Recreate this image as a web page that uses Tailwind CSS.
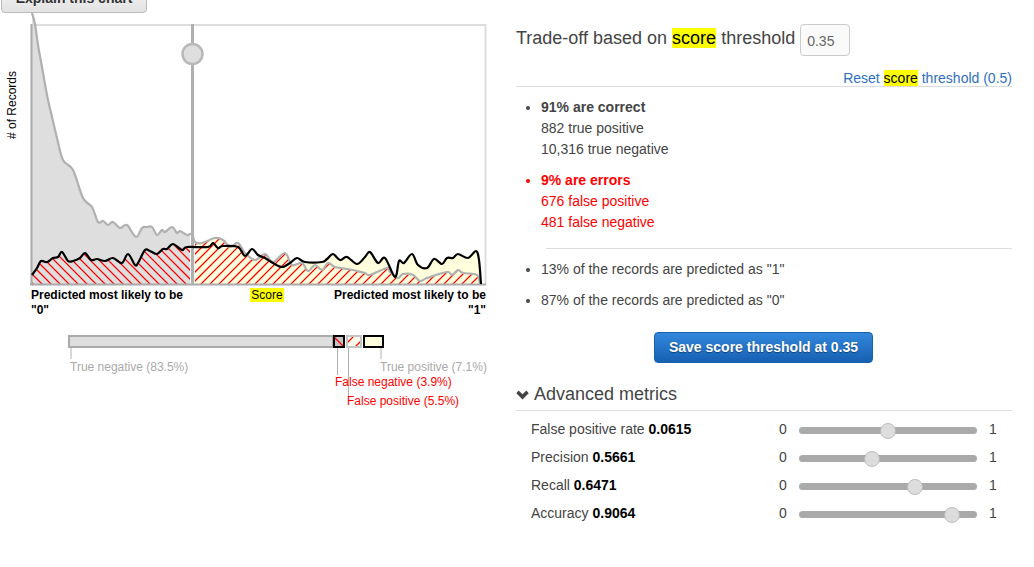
<!DOCTYPE html>
<html lang="en">
<head>
<meta charset="utf-8">
<title>Score threshold</title>
<script src="https://cdn.jsdelivr.net/npm/@tailwindcss/browser@4"></script>
</head>
<body class="bg-white">
<div class="flex w-[1034px] h-[567px] overflow-hidden bg-white font-['Liberation_Sans',Arial,sans-serif] text-[14px] text-[#444]">

  <!-- Left column: chart -->
  <div class="w-[516px] shrink-0">
    <button class="block ml-px -mt-[17px] w-[146px] h-[30px] rounded-[4px] border border-[#bbb] bg-gradient-to-b from-[#f8f8f8] to-[#e2e2e2] text-[14px] font-bold text-[#333] leading-[28px]">Explain this chart</button>

    <svg class="block" width="516" height="275" viewBox="0 13 516 275" font-family="'Liberation Sans',Arial,sans-serif">
      <defs>
        <clipPath id="clipL"><rect x="31" y="0" width="159" height="284"/></clipPath>
        <clipPath id="clipR"><rect x="195" y="0" width="290" height="284"/></clipPath>
        <clipPath id="underBlack"><polygon points="32,275 37,268 41,261 47,262 53,258 58,257 62,252 68,261 73,261 80,258 85,253 91,260 97,259 105,261 113,258 122,263 128,254 135,265 138,263 145,250 150,251 157,254 163,249 167,249 173,244 182,250 187,247 192,247 192,284 32,284"/></clipPath>
        <clipPath id="underGray"><polygon points="192,234 195,242 202,243 215,238 223,240 230,247 238,243 245,253 255,260 265,254 273,262 285,253 292,265 302,263 308,271 315,265 322,270 328,263 335,267 348,269 357,271 365,273 370,275 387,268 390,272 398,278 403,274 413,275 420,281 427,278 447,272 452,275 458,270 463,273 477,275 480,284 192,284"/></clipPath>
      </defs>

      <!-- Frame -->
      <path d="M32 25H485.5V284" fill="none" stroke="#ddd" stroke-width="2"/>

      <!-- Left region fills -->
      <g clip-path="url(#clipL)">
        <polygon fill="#dedede" points="32,13 35,24 38,45 42,67 47,95 52,117 57,138 63,160 73,170 83,198 92,207 98,222 103,221 108,225 113,222 120,228 127,225 136,237 142,228 147,227 152,227 157,235 162,230 165,232 172,227 177,233 180,231 187,235 192,234 192,284 32,284"/>
        <g clip-path="url(#underBlack)">
          <path data-hatch="down" stroke="#ff0000" stroke-width="1.25" fill="none"/>
        </g>
      </g>

      <!-- Right region fills -->
      <g clip-path="url(#clipR)">
        <polygon fill="#ffffdd" points="192,234 195,242 202,243 215,238 223,240 230,247 238,243 245,253 255,260 265,254 273,262 285,253 292,265 302,263 322,262 327,259 333,254 340,260 347,257 357,264 365,257 370,252 378,263 385,258 395,277 399,261 404,263 412,254 418,265 427,268 434,259 442,264 447,258 453,258 458,254 468,258 476,251 479,260 481,284 192,284"/>
        <g clip-path="url(#underGray)">
          <path data-hatch="up" stroke="#ff0000" stroke-width="1.25" fill="none"/>
        </g>
      </g>

      <!-- Axes -->
      <path d="M31.5 24V285M30 284.5H486" fill="none" stroke="#aaa" stroke-width="2"/>

      <!-- Gray curve -->
      <path data-pts="32,13 35,24 38,45 42,67 47,95 52,117 57,138 63,160 73,170 83,198 92,207 98,222 103,221 108,225 113,222 120,228 127,225 136,237 142,228 147,227 152,227 157,235 162,230 165,232 172,227 177,233 180,231 187,235 192,234 195,242 202,243 215,238 223,240 230,247 238,243 245,253 255,260 265,254 273,262 285,253 292,265 302,263 308,271 315,265 322,270 328,263 335,267 348,269 357,271 365,273 370,275 387,268 390,272 398,278 403,274 413,275 420,281 427,278 447,272 452,275 458,270 463,273 477,275 480,284" fill="none" stroke="#b0b0b0" stroke-width="2.2"/>

      <!-- Threshold line and handle -->
      <rect x="191" y="24" width="3" height="260" fill="#b0b0b0"/>
      <circle cx="192.5" cy="54" r="10" fill="#dedede" stroke="#b8b8b8" stroke-width="2.5"/>

      <!-- Black curve -->
      <path data-pts="32,275 37,268 41,261 47,262 53,258 58,257 62,252 68,261 73,261 80,258 85,253 91,260 97,259 105,261 113,258 122,263 128,254 135,265 138,263 145,250 150,251 157,254 163,249 167,249 173,244 182,250 187,247 208,247 213,243 218,248 223,246 238,247 245,256 252,249 258,255 265,258 273,263 282,267 290,263 297,258 305,262 322,262 327,259 333,254 340,260 347,257 357,264 365,257 370,252 378,263 385,258 395,277 399,261 404,263 412,254 418,265 427,268 434,259 442,264 447,258 453,258 458,254 468,258 476,251 479,260 481,284" fill="none" stroke="#000" stroke-width="2.2"/>

      <text transform="translate(16 139) rotate(-90)" font-size="12" fill="#000"># of Records</text>
    </svg>

    <div class="flex ml-[31px] w-[455px] text-[12px] font-bold leading-[15px] text-black">
      <div class="w-[220px]">Predicted most likely to be<br>"0"</div>
      <div class="flex-1 text-center font-normal"><span class="bg-[#ffff00] px-px">Score</span></div>
      <div class="w-[203px] text-right">Predicted most likely to be<br>"1"</div>
    </div>

    <svg class="block" width="516" height="100" viewBox="0 318 516 100" font-family="'Liberation Sans',Arial,sans-serif" font-size="12">
      <defs>
        <clipPath id="barFn"><rect x="334" y="336" width="10" height="11"/></clipPath>
        <clipPath id="barFp"><rect x="347" y="336" width="14" height="11"/></clipPath>
      </defs>
      <!-- Leader lines -->
      <path d="M71 348V359M337.5 348V375M348.5 348V396M381 348V359" stroke="#b0b0b0" stroke-width="1" fill="none"/>
      <!-- True negative -->
      <rect x="69" y="336" width="264" height="11" fill="#dedede" stroke="#aaa" stroke-width="2"/>
      <!-- False negative -->
      <rect x="334" y="336" width="10" height="11" fill="#c4c4c4"/>
      <path clip-path="url(#barFn)" d="M330 333L350 353" stroke="#ff0000" stroke-width="1.25" fill="none"/>
      <rect x="334" y="336" width="10" height="11" fill="none" stroke="#000" stroke-width="2"/>
      <!-- False positive -->
      <rect x="347" y="336" width="14" height="11" fill="#fffff0"/>
      <path clip-path="url(#barFp)" d="M340 350L358 332M350 352L368 334" stroke="#ff0000" stroke-width="1.25" fill="none"/>
      <rect x="347" y="336" width="14" height="11" fill="none" stroke="#c4c4c4" stroke-width="2"/>
      <!-- True positive -->
      <rect x="364" y="336" width="19" height="11" fill="#ffffdd" stroke="#000" stroke-width="2"/>

      <text x="70" y="371" fill="#aaa">True negative (83.5%)</text>
      <text x="380" y="371" fill="#aaa">True positive (7.1%)</text>
      <text x="335" y="386" fill="#ff0000">False negative (3.9%)</text>
      <text x="347" y="405" fill="#ff0000">False positive (5.5%)</text>
    </svg>
  </div>

  <!-- Right column -->
  <div class="w-[496px] shrink-0">
    <div class="flex items-center mt-[24px] h-[32px] text-[18px]">
      <span class="-mt-[4px]">Trade-off based on <span class="bg-[#ffff00] text-black">score</span> threshold</span>
      <div class="ml-[5px] w-[50px] h-[32px] rounded-[4px] border border-[#ccc] bg-[#fafafa] pl-[6px] text-[14px] leading-[32px] text-[#666]">0.35</div>
    </div>

    <div class="mt-[12px] h-[19px] border-b border-[#ddd] text-right leading-[20px] text-[#2f6fbf]">Reset <span class="bg-[#ffff00] text-black">score</span> threshold (0.5)</div>

    <ul class="list-disc pl-[25px] pt-[10px] leading-[21px]">
      <li><b>91% are correct</b><br>882 true positive<br>10,316 true negative</li>
      <li class="mt-[10px] text-[#ff0000]"><b>9% are errors</b><br>676 false positive<br>481 false negative</li>
    </ul>
    <div class="ml-[30px] mt-[15px] border-t border-[#ddd]"></div>
    <ul class="list-disc pl-[25px] pt-[10px] leading-[21px]">
      <li>13% of the records are predicted as "1"</li>
      <li class="mt-[10px]">87% of the records are predicted as "0"</li>
    </ul>

    <div class="flex mt-[21px] pl-[138px]">
      <button class="w-[219px] h-[31px] rounded-[4px] border border-[#1a62b0] bg-gradient-to-b from-[#3388dc] to-[#1660b2] text-[14px] font-bold text-white [text-shadow:0_1px_1px_rgba(0,0,0,0.4)]">Save score threshold at 0.35</button>
    </div>

    <div class="flex items-center mt-[19px] h-[29px] border-b border-[#ddd] pb-[3px] text-[18px]">
      <svg class="shrink-0 mr-[5px]" width="13" height="10" viewBox="0 0 13 10"><path d="M0.3 3.2L2.6 0.6L6.5 4.3L10.4 0.6L12.7 3.2L6.5 9.4Z" fill="#444"/></svg>
      <span>Advanced metrics</span>
    </div>

    <div class="pt-[4px]">
      <div class="flex items-center h-[28px] pl-[15px]">
        <div class="w-[248px]">False positive rate <b class="text-black">0.0615</b></div>
        <div class="w-[20px]">0</div>
        <div class="relative w-[178px] h-[7px] mt-[2px] rounded-full bg-[#aaa]"><div class="absolute left-[81px] -top-[4px] w-[16px] h-[16px] rounded-full border border-[#bbb] bg-[#ddd]"></div></div>
        <div class="ml-[12px]">1</div>
      </div>
      <div class="flex items-center h-[28px] pl-[15px]">
        <div class="w-[248px]">Precision <b class="text-black">0.5661</b></div>
        <div class="w-[20px]">0</div>
        <div class="relative w-[178px] h-[7px] mt-[2px] rounded-full bg-[#aaa]"><div class="absolute left-[65px] -top-[4px] w-[16px] h-[16px] rounded-full border border-[#bbb] bg-[#ddd]"></div></div>
        <div class="ml-[12px]">1</div>
      </div>
      <div class="flex items-center h-[28px] pl-[15px]">
        <div class="w-[248px]">Recall <b class="text-black">0.6471</b></div>
        <div class="w-[20px]">0</div>
        <div class="relative w-[178px] h-[7px] mt-[2px] rounded-full bg-[#aaa]"><div class="absolute left-[108px] -top-[4px] w-[16px] h-[16px] rounded-full border border-[#bbb] bg-[#ddd]"></div></div>
        <div class="ml-[12px]">1</div>
      </div>
      <div class="flex items-center h-[28px] pl-[15px]">
        <div class="w-[248px]">Accuracy <b class="text-black">0.9064</b></div>
        <div class="w-[20px]">0</div>
        <div class="relative w-[178px] h-[7px] mt-[2px] rounded-full bg-[#aaa]"><div class="absolute left-[145px] -top-[4px] w-[16px] h-[16px] rounded-full border border-[#bbb] bg-[#ddd]"></div></div>
        <div class="ml-[12px]">1</div>
      </div>
    </div>
  </div>
</div>
<script>
  // Smooth the sampled curves through their data points (Catmull-Rom to Bezier).
  document.querySelectorAll('[data-pts]').forEach(function (el) {
    var p = el.getAttribute('data-pts').trim().split(/\s+/).map(function (s) { return s.split(',').map(Number); });
    var d = 'M' + p[0][0] + ' ' + p[0][1];
    for (var i = 0; i < p.length - 1; i++) {
      var a = p[Math.max(i - 1, 0)], b = p[i], c = p[i + 1], e = p[Math.min(i + 2, p.length - 1)];
      d += 'C' + (b[0] + (c[0] - a[0]) / 6) + ' ' + (b[1] + (c[1] - a[1]) / 6) + ' ' + (c[0] - (e[0] - b[0]) / 6) + ' ' + (c[1] - (e[1] - b[1]) / 6) + ' ' + c[0] + ' ' + c[1];
    }
    el.setAttribute('d', d);
  });
  // Diagonal hatch lines, 9px apart.
  document.querySelectorAll('[data-hatch]').forEach(function (el) {
    var d = '';
    if (el.getAttribute('data-hatch') === 'down') {
      for (var x = -30; x < 195; x += 9) d += 'M' + x + ' 230L' + (x + 60) + ' 290';
    } else {
      for (var x = 150; x < 500; x += 9) d += 'M' + x + ' 290L' + (x + 60) + ' 230';
    }
    el.setAttribute('d', d);
  });
</script>
</body>
</html>
